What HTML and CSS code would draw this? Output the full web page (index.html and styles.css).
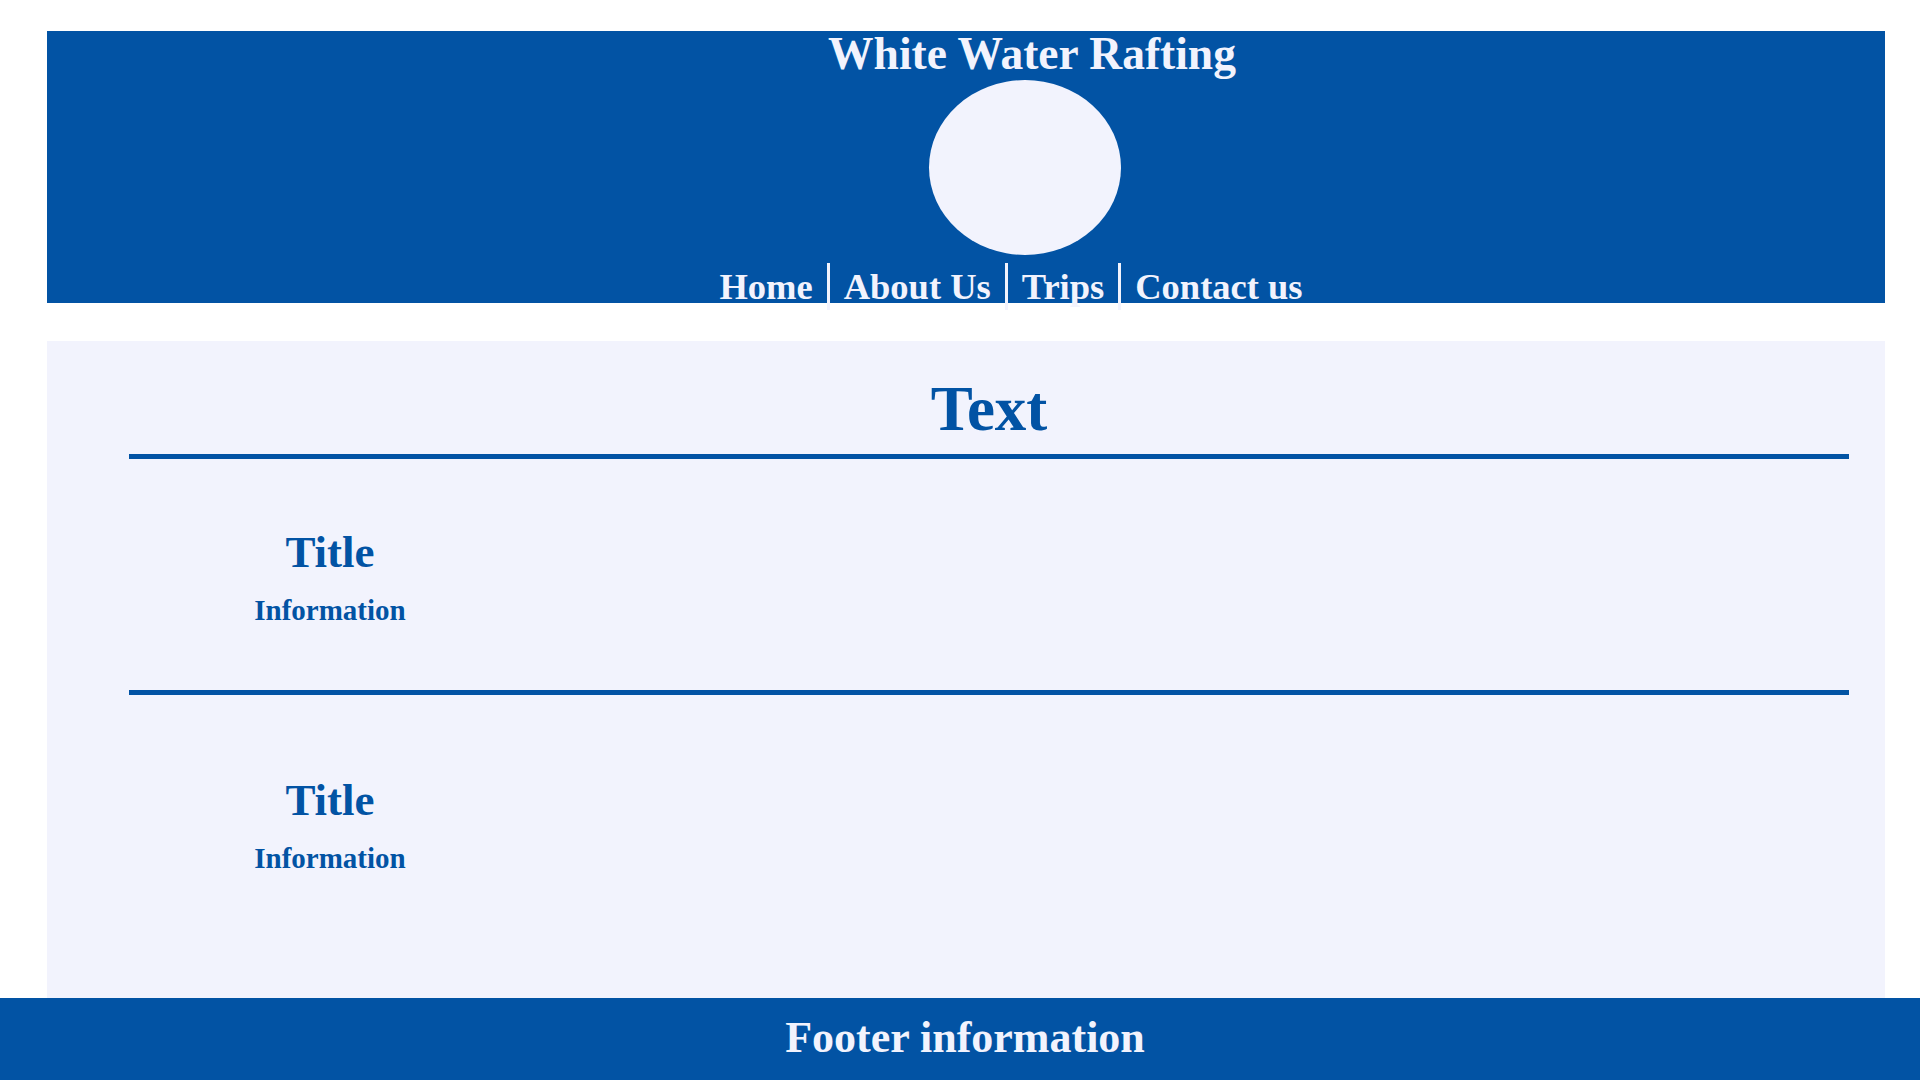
FILE: index.html
```html
<!DOCTYPE html>
<html lang="en">
<head>
<meta charset="utf-8">
<title>White Water Rafting</title>
<link rel="stylesheet" href="styles.css">
</head>
<body>
  <header class="site-header">
    <div class="brand">
      <h1 class="brand-title">White Water Rafting</h1>
      <div class="logo"></div>
    </div>
    <nav class="main-nav">
      <a href="#" class="nav-link">Home</a>
      <a href="#" class="nav-link">About Us</a>
      <a href="#" class="nav-link">Trips</a>
      <a href="#" class="nav-link">Contact us</a>
    </nav>
  </header>

  <main class="content">
    <div class="content-inner">
      <h2 class="content-heading">Text</h2>
      <section class="entry entry-first">
        <h3 class="entry-title">Title</h3>
        <p class="entry-info">Information</p>
      </section>
      <section class="entry entry-second">
        <h3 class="entry-title">Title</h3>
        <p class="entry-info">Information</p>
      </section>
    </div>
  </main>

  <footer class="site-footer">
    <p class="footer-text">Footer information</p>
  </footer>
</body>
</html>
```
FILE: styles.css
```css
* {
  box-sizing: border-box;
}

html, body {
  margin: 0;
  padding: 0;
  background: #ffffff;
}

body {
  font-family: "Liberation Serif", "Times New Roman", serif;
  font-weight: bold;
  overflow: hidden;
}

.site-header {
  margin: 31px 35px 0 47px;
  height: 272px;
  background: #0253a4;
  display: flex;
  flex-direction: column;
  align-items: center;
}

.brand {
  display: flex;
  flex-direction: column;
  align-items: center;
}

.brand-title {
  margin: 0;
  padding-left: 132px;
  font-size: 45.5px;
  line-height: 45px;
  font-weight: bold;
  color: #f2f3fd;
  white-space: nowrap;
}

.logo {
  margin-top: 4px;
  margin-left: 119px;
  width: 192px;
  height: 175px;
  border-radius: 50%;
  background: #f2f3fd;
}

.main-nav {
  margin-top: 8px;
  padding-left: 90px;
  display: flex;
  height: 47px;
}

.nav-link {
  font-size: 36.5px;
  line-height: 47px;
  padding: 0 14px;
  color: #f2f3fd;
  text-decoration: none;
  white-space: nowrap;
}

.nav-link + .nav-link {
  border-left: 3px solid #f2f3fd;
}

.content {
  margin: 38px 35px 0 47px;
  height: 657px;
  padding-top: 37px;
  background: #f2f3fd;
}

.content-inner {
  margin: 0 36px 0 82px;
}

.content-heading {
  margin: 0;
  padding-bottom: 13px;
  border-bottom: 5px solid #0253a4;
  font-size: 63px;
  line-height: 63px;
  text-align: center;
  color: #0253a4;
}

.entry {
  text-align: center;
  color: #0253a4;
}

.entry-first {
  padding-top: 70px;
  padding-bottom: 65px;
  border-bottom: 5px solid #0253a4;
}

.entry-second {
  padding-top: 82px;
}

.entry-title,
.entry-info {
  width: 402px;
  margin: 0;
}

.entry-title {
  font-size: 45px;
  line-height: 46px;
}

.entry-info {
  margin-top: 21px;
  font-size: 29px;
  line-height: 29px;
}

.site-footer {
  height: 82px;
  background: #0253a4;
  padding-top: 18px;
  padding-left: 10px;
  text-align: center;
}

.footer-text {
  margin: 0;
  font-size: 44px;
  line-height: 44px;
  color: #f2f3fd;
}
```
